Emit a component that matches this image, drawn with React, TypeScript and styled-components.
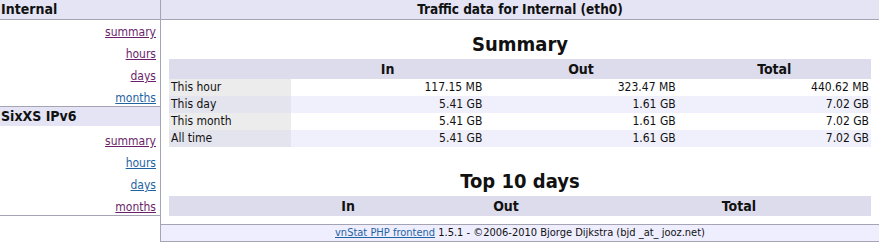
import React from "react";
import styled, { createGlobalStyle } from "styled-components";

const GlobalStyle = createGlobalStyle`
  html, body {
    margin: 0;
    padding: 0;
    background: #ffffff;
  }
  body {
    font-family: "DejaVu Sans Condensed", "DejaVu Sans", Verdana, sans-serif;
    font-stretch: condensed;
    font-size: 12px;
    color: #111111;
  }
`;

const BORDER = "#a4a4b4";

const Wrap = styled.div`
  display: flex;
  align-items: flex-start;
  width: 879px;
`;

const Sidebar = styled.nav`
  width: 160px;
  flex: none;
  display: flex;
  flex-direction: column;
`;

const Iface = styled.div`
  display: flex;
  flex-direction: column;
  border-bottom: 1px solid ${BORDER};
`;

const IfaceTitle = styled.div<{ $active?: boolean }>`
  height: 19px;
  line-height: 19px;
  padding-left: 1px;
  background: #e4e4f4;
  font-weight: bold;
  font-size: 14px;
  color: #111111;
  border-bottom: ${(p) => (p.$active ? `1px solid ${BORDER}` : "0")};
`;

const LinkList = styled.ul<{ $top: number }>`
  list-style: none;
  margin: 0;
  padding: ${(p) => p.$top}px 4px 1px 0;
  display: flex;
  flex-direction: column;
  align-items: flex-end;
  gap: 8px;
`;

const LinkItem = styled.li`
  line-height: 14px;
`;

const NavLink = styled.a<{ $visited?: boolean }>`
  color: ${(p) => (p.$visited ? "#6b1f6b" : "#1f63a3")};
  text-decoration: underline;
`;

const Content = styled.div`
  flex: 1;
  border-left: 1px solid ${BORDER};
  display: flex;
  flex-direction: column;
`;

const Header = styled.div`
  height: 19px;
  line-height: 19px;
  background: #e4e4f4;
  border-bottom: 1px solid ${BORDER};
  text-align: center;
  font-weight: bold;
  font-size: 13.5px;
`;

const Main = styled.div`
  padding: 13px 8px 8px 8px;
  display: flex;
  flex-direction: column;
  gap: 23px;
`;

const DataTable = styled.table`
  width: 100%;
  border-collapse: separate;
  border-spacing: 0;
`;

const Caption = styled.caption`
  font-weight: bold;
  font-size: 20px;
  line-height: 22px;
  padding-bottom: 4px;
  text-align: center;
`;

const Th = styled.th<{ $w?: number }>`
  background: #dcdcec;
  font-weight: bold;
  font-size: 14px;
  line-height: 18px;
  padding: 1px 1px;
  text-align: center;
  width: ${(p) => (p.$w ? `${p.$w}px` : "auto")};
`;

const Row = styled.tr<{ $even?: boolean }>`
  background: ${(p) => (p.$even ? "#f0f0fc" : "#ffffff")};
`;

const LabelCell = styled.td<{ $even?: boolean }>`
  background: ${(p) => (p.$even ? "#e4e4ee" : "#ececec")};
  line-height: 15px;
  padding: 1px 2px;
  text-align: left;
  white-space: nowrap;
`;

const NumCell = styled.td`
  line-height: 15px;
  padding: 1px 2px;
  text-align: right;
  white-space: nowrap;
`;

const Footer = styled.div`
  border-top: 1px solid ${BORDER};
  border-bottom: 1px solid ${BORDER};
  background: #eeeeff;
  height: 16px;
  line-height: 16px;
  text-align: center;
  font-size: 11px;
`;

const FootLink = styled.a`
  color: #1f63a3;
  text-decoration: underline;
`;

type Link = { label: string; visited: boolean };

const ifaces: { name: string; active: boolean; top: number; links: Link[] }[] = [
  {
    name: "Internal",
    active: true,
    top: 5,
    links: [
      { label: "summary", visited: true },
      { label: "hours", visited: true },
      { label: "days", visited: true },
      { label: "months", visited: false },
    ],
  },
  {
    name: "SixXS IPv6",
    active: false,
    top: 8,
    links: [
      { label: "summary", visited: true },
      { label: "hours", visited: false },
      { label: "days", visited: false },
      { label: "months", visited: true },
    ],
  },
];

const summary = [
  ["This hour", "117.15 MB", "323.47 MB", "440.62 MB"],
  ["This day", "5.41 GB", "1.61 GB", "7.02 GB"],
  ["This month", "5.41 GB", "1.61 GB", "7.02 GB"],
  ["All time", "5.41 GB", "1.61 GB", "7.02 GB"],
];

const HeadRow = () => (
  <tr>
    <Th $w={120}>&nbsp;</Th>
    <Th>In</Th>
    <Th>Out</Th>
    <Th>Total</Th>
  </tr>
);

export default function App() {
  return (
    <>
      <GlobalStyle />
      <Wrap>
        <Sidebar>
          {ifaces.map((f) => (
            <Iface key={f.name}>
              <IfaceTitle $active={f.active}>{f.name}</IfaceTitle>
              <LinkList $top={f.top}>
                {f.links.map((l) => (
                  <LinkItem key={l.label}>
                    <NavLink href="#" $visited={l.visited}>
                      {l.label}
                    </NavLink>
                  </LinkItem>
                ))}
              </LinkList>
            </Iface>
          ))}
        </Sidebar>
        <Content>
          <Header>Traffic data for Internal (eth0)</Header>
          <Main>
            <DataTable>
              <Caption>Summary</Caption>
              <tbody>
                <HeadRow />
                {summary.map((r, i) => (
                  <Row key={r[0]} $even={i % 2 === 1}>
                    <LabelCell $even={i % 2 === 1}>{r[0]}</LabelCell>
                    <NumCell>{r[1]}</NumCell>
                    <NumCell>{r[2]}</NumCell>
                    <NumCell>{r[3]}</NumCell>
                  </Row>
                ))}
              </tbody>
            </DataTable>
            <DataTable>
              <Caption>Top 10 days</Caption>
              <tbody>
                <HeadRow />
              </tbody>
            </DataTable>
          </Main>
          <Footer>
            <FootLink href="#">vnStat PHP frontend</FootLink> 1.5.1 - ©2006-2010 Bjorge
            Dijkstra (bjd _at_ jooz.net)
          </Footer>
        </Content>
      </Wrap>
    </>
  );
}
